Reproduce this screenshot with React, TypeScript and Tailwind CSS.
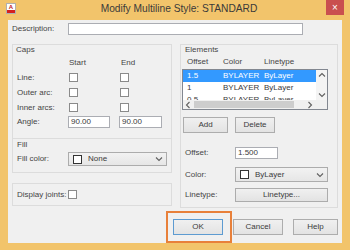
import React from 'react';

const font = { fontFamily: '"Liberation Sans", Arial, sans-serif' };

function Check() {
  return <div className="h-[9px] w-[9px] border border-[#8a8a8a] bg-white" />;
}

function Chevron({ dir = 'down' }: { dir?: 'down' | 'up' | 'left' | 'right' }) {
  const d = {
    down: 'M1 2.5 L4 5.5 L7 2.5',
    up: 'M1 5.5 L4 2.5 L7 5.5',
    left: 'M5.5 1 L2.5 4 L5.5 7',
    right: 'M2.5 1 L5.5 4 L2.5 7',
  }[dir];
  return (
    <svg width="8" height="8" viewBox="0 0 8 8" className="shrink-0">
      <path d={d} fill="none" stroke="#606060" strokeWidth="1.1" />
    </svg>
  );
}

function TextBox({ value, w }: { value: string; w: string }) {
  return (
    <div className={`flex h-[12px] items-center border border-[#abadb3] bg-white pl-[2px] text-[8px] leading-none text-[#3b3b3b] ${w}`}>
      {value}
    </div>
  );
}

function Dropdown({ label, w, h }: { label: string; w: string; h: string }) {
  return (
    <div className={`flex items-center border border-[#acacac] bg-gradient-to-b from-[#f2f2f2] to-[#e6e6e6] pl-[4px] pr-[3px] ${w} ${h}`}>
      <div className="h-[9px] w-[9px] border border-[#333] bg-white" />
      <span className="ml-[6px] flex-1 text-[8px] leading-none text-[#3b3b3b]">{label}</span>
      <Chevron />
    </div>
  );
}

function Btn({ children, w, primary }: { children: React.ReactNode; w: string; primary?: boolean }) {
  return (
    <div
      className={`flex h-[16px] items-center justify-center border bg-gradient-to-b from-[#f0f0f0] to-[#e3e3e3] text-[8px] leading-none text-[#3b3b3b] ${w} ${
        primary ? 'border-[#5d9bd1]' : 'border-[#adadad]'
      }`}
    >
      {children}
    </div>
  );
}

const rows = [
  { off: '1.5', sel: true },
  { off: '1', sel: false },
  { off: '0.5', sel: false },
];

export default function App() {
  return (
    <div className="relative flex h-[250px] w-[350px] flex-col overflow-hidden bg-[#f2c46b]" style={font}>
      {/* title bar */}
      <div className="flex h-[20px] items-start">
        <div className="ml-[6px] mt-[3px] flex h-[11px] w-[10px] flex-col overflow-hidden border border-[#b0b0b0]">
          <div className="flex h-[6px] items-center justify-center bg-white text-[6px] font-bold leading-none text-[#c01818]">A</div>
          <div className="flex-1 bg-[#d42020]" />
        </div>
        <div className="flex-1 pl-[16px] pt-[3px] text-center text-[10.2px] leading-[12px] text-[#3a3a3a]">
          Modify Multiline Style: STANDARD
        </div>
        <div className="mr-[6px] flex h-[15px] w-[18px] items-center justify-center bg-[#c94f4f] text-[10px] leading-none text-white">
          ×
        </div>
      </div>

      {/* body */}
      <div className="mx-[8px] mb-[7px] flex flex-1 flex-col bg-[#f0f0f0] text-[8px] leading-none text-[#454545]">
        <div className="mt-[3px] flex items-center pl-[4px]">
          <span className="w-[56px]">Description:</span>
          <TextBox value="" w="w-[235px]" />
        </div>

        <div className="mt-[9px] flex gap-[8px] pl-[4px]">
          {/* left column */}
          <div className="flex w-[160px] flex-col">
            <div className="h-[95px] border border-[#dcdcdc] pl-[3px]">
              <div className="h-[9px] leading-[9px]">Caps</div>
              <div className="mt-[4px] grid grid-cols-[52px_51px_43px] items-center">
                <span />
                <span className="h-[10px] pl-[1px] leading-[10px]">Start</span>
                <span className="h-[10px] pl-[2px] leading-[10px]">End</span>
              </div>
              <div className="mt-[2px] grid grid-cols-[52px_51px_43px] grid-rows-[15px_15px_15px_14px] items-center">
                <span className="pl-[1px]">Line:</span>
                <div className="pl-[1px]"><Check /></div>
                <div className="pl-[1px]"><Check /></div>
                <span className="pl-[1px]">Outer arc:</span>
                <div className="pl-[1px]"><Check /></div>
                <div className="pl-[1px]"><Check /></div>
                <span className="pl-[1px]">Inner arcs:</span>
                <div className="pl-[1px]"><Check /></div>
                <div className="pl-[1px]"><Check /></div>
                <span className="pl-[1px]">Angle:</span>
                <TextBox value="90.00" w="w-[42px]" />
                <TextBox value="90.00" w="w-[43px]" />
              </div>
            </div>
            <div className="h-[34px] border border-t-0 border-[#dcdcdc] pl-[4px]">
              <div className="mt-[1px] h-[9px] leading-[9px]">Fill</div>
              <div className="mt-[3px] flex items-center">
                <span className="w-[51px]">Fill color:</span>
                <Dropdown label="None" w="w-[99px]" h="h-[14px]" />
              </div>
            </div>
            <div className="mt-[10px] flex h-[23px] items-center border border-[#dcdcdc] pl-[4px]">
              <span className="w-[51px]">Display joints:</span>
              <Check />
            </div>
          </div>

          {/* right column */}
          <div className="flex h-[164px] w-[158px] flex-col border border-[#dcdcdc]">
            <div className="h-[9px] pl-[4px] leading-[9px]">Elements</div>
            <div className="mt-[1px] flex h-[14px] items-center pl-[6px]">
              <span className="w-[36px]">Offset</span>
              <span className="w-[41px]">Color</span>
              <span>Linetype</span>
            </div>
            <div className="ml-[1px] flex h-[41px] w-[146px] flex-col border border-[#828790] bg-white">
              <div className="flex h-[30px]">
                <div className="flex-1 overflow-hidden">
                  {rows.map((r) => (
                    <div
                      key={r.off}
                      className={`flex h-[12px] shrink-0 items-center pl-[4px] ${r.sel ? 'bg-[#3399ff] text-white' : 'text-[#3b3b3b]'}`}
                    >
                      <span className="w-[36px]">{r.off}</span>
                      <span className="w-[41px]">BYLAYER</span>
                      <span>ByLayer</span>
                    </div>
                  ))}
                </div>
                <div className="flex w-[11px] flex-col items-center justify-between bg-[#f4f4f4] py-[1px]">
                  <Chevron dir="up" />
                  <Chevron dir="down" />
                </div>
              </div>
              <div className="flex h-[9px] items-center bg-[#f0f0f0] pl-[1px] pr-[13px]">
                <Chevron dir="left" />
                <div className="ml-[2px] h-[7px] w-[100px] bg-[#cdcdcd]" />
                <div className="flex-1" />
                <Chevron dir="right" />
              </div>
            </div>
            <div className="mt-[7px] flex gap-[7px] pl-[2px]">
              <Btn w="w-[45px] h-[13px]">Add</Btn>
              <Btn w="w-[40px]">Delete</Btn>
            </div>
            <div className="mt-[14px] flex items-center pl-[4px]">
              <span className="w-[50px]">Offset:</span>
              <TextBox value="1.500" w="w-[43px]" />
            </div>
            <div className="mt-[8px] flex items-center pl-[4px]">
              <span className="w-[50px]">Color:</span>
              <Dropdown label="ByLayer" w="w-[93px]" h="h-[15px]" />
            </div>
            <div className="mt-[6px] flex items-center pl-[4px]">
              <span className="w-[50px]">Linetype:</span>
              <div className="flex h-[14px] w-[93px] items-center justify-center border border-[#acacac] bg-gradient-to-b from-[#f0f0f0] to-[#e3e3e3] text-[#3b3b3b]">
                Linetype...
              </div>
            </div>
          </div>
        </div>

        <div className="mt-[11px] flex justify-end gap-[10px] pr-[4px]">
          <Btn w="w-[50px]" primary>OK</Btn>
          <Btn w="w-[50px]">Cancel</Btn>
          <Btn w="w-[45px]">Help</Btn>
        </div>
      </div>

      {/* highlight annotation */}
      <div className="absolute left-[166px] top-[211px] h-[32px] w-[66px] border-[2.5px] border-[#e8803a]" />
    </div>
  );
}
